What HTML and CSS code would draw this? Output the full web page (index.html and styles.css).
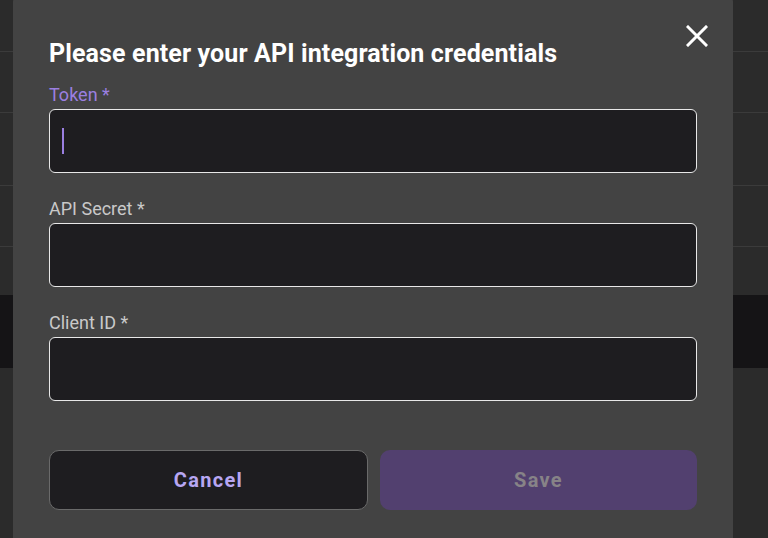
FILE: index.html
```html
<!DOCTYPE html>
<html lang="en">
<head>
    <meta charset="UTF-8">
    <meta name="viewport" content="width=device-width, initial-scale=1.0">
    <title>API Credentials</title>
    <link rel="stylesheet" href="styles.css">
</head>
<body>
    <div class="backdrop">
        <div class="row"></div>
        <div class="row"></div>
        <div class="row row-tall"></div>
        <div class="row"></div>
        <div class="band"></div>
    </div>

    <div class="modal">
        <button class="close" aria-label="Close">
            <svg width="22" height="22" viewBox="0 0 22 22">
                <path d="M2 2 L20 20 M20 2 L2 20" stroke="#fff" stroke-width="3" stroke-linecap="square"/>
            </svg>
        </button>

        <h2 class="title">Please enter your API integration credentials</h2>

        <div class="field">
            <label class="field-label active">Token *</label>
            <div class="input focused"><span class="caret"></span></div>
        </div>

        <div class="field">
            <label class="field-label">API Secret *</label>
            <div class="input"></div>
        </div>

        <div class="field">
            <label class="field-label">Client ID *</label>
            <div class="input"></div>
        </div>

        <div class="actions">
            <button class="btn btn-cancel">Cancel</button>
            <button class="btn btn-save" disabled>Save</button>
        </div>
    </div>
</body>
</html>
```

FILE: styles.css
```css
body {
    margin: 0;
    background: #2b2b2b;
    font-family: Roboto, 'Liberation Sans', sans-serif;
    overflow: hidden;
    height: 538px;
}

.backdrop {
    display: flex;
    flex-direction: column;
}

.row {
    height: 60px;
    border-bottom: 1px solid #3b3b3b;
}

.row:first-child {
    height: 51px;
}

.row-tall {
    height: 72px;
}

.band {
    margin-top: 48px;
    height: 73px;
    background: #151416;
}

.modal {
    position: absolute;
    left: 13px;
    top: -6px;
    width: 648px;
    height: 560px;
    padding: 0 36px;
    background: #434343;
    border-radius: 8px;
}

.close {
    position: absolute;
    top: 31px;
    right: 25px;
    width: 22px;
    height: 22px;
    padding: 0;
    border: none;
    background: none;
    display: flex;
}

.title {
    margin: 0;
    padding-top: 45px;
    font-size: 25px;
    line-height: 30px;
    font-weight: 700;
    letter-spacing: 0.12px;
    color: #ffffff;
}

.field {
    display: flex;
    flex-direction: column;
    gap: 4px;
    margin-top: 26px;
}

.field:first-of-type {
    margin-top: 16px;
}

.field-label {
    font-size: 18px;
    line-height: 20px;
    color: #c9c9c9;
}

.field-label.active {
    color: #9b7fe0;
}

.input {
    height: 62px;
    border: 1px solid #e8e8e8;
    border-radius: 6px;
    background: #1e1d20;
    display: flex;
    align-items: center;
    padding-left: 12px;
}

.caret {
    width: 2px;
    height: 26px;
    background: #9b7fe0;
}

.actions {
    display: flex;
    gap: 12px;
    margin-top: 49px;
}

.btn {
    flex: 1;
    height: 60px;
    border-radius: 10px;
    font-family: Roboto, 'Liberation Sans', sans-serif;
    font-size: 20px;
    font-weight: 700;
    letter-spacing: 1.3px;
}

.btn-cancel {
    background: #1e1d20;
    border: 1px solid #6a6a6a;
    color: #b7a6f2;
}

.btn-save {
    background: #52406f;
    border: none;
    color: #878387;
}
```
